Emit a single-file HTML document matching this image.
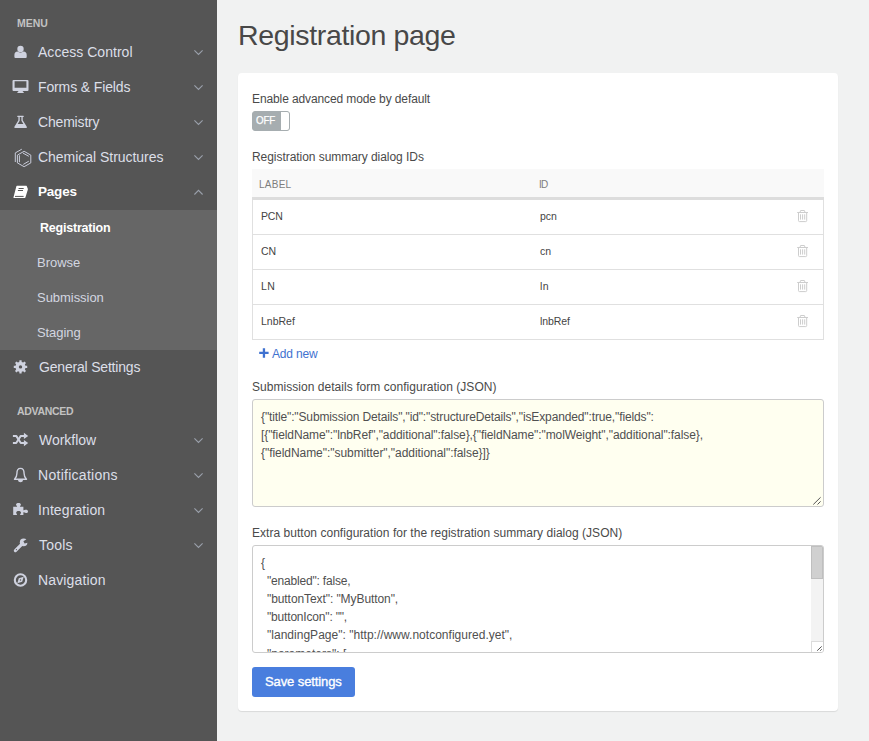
<!DOCTYPE html>
<html lang="en">
<head>
<meta charset="utf-8">
<title>Registration page</title>
<style>
*{box-sizing:border-box;margin:0;padding:0}
html,body{width:869px;height:741px;overflow:hidden}
body{background:#f1f2f2;font-family:"Liberation Sans",sans-serif;color:#333;position:relative;font-size:12px}
#side{position:absolute;left:0;top:0;width:217px;height:741px;background:#555}
#side .sub{position:absolute;left:0;top:210px;width:217px;height:140px;background:#666}
#ico{position:absolute;left:0;top:0;width:217px;height:741px}
.t{position:absolute;white-space:nowrap}
.hd{font-size:10.5px;font-weight:bold;color:#c2c2c2;line-height:14px}
.mi{font-size:14px;color:#dcdfe8;line-height:20px}
.mi.act{color:#fff;font-weight:bold;font-size:13.5px}
.si{font-size:13px;color:#d3d6e0;line-height:18px}
.si.act{color:#fff;font-weight:bold;font-size:12.5px}
h1{font-size:28.5px;font-weight:normal;color:#484848;line-height:38px}
#card{position:absolute;left:238px;top:73px;width:600px;height:638px;background:#fff;border-radius:4px;box-shadow:0 1px 1px rgba(0,0,0,.10)}
.lb{font-size:12px;color:#4a4a4a;line-height:16px}
.tg{position:absolute;left:252px;top:111px;width:38px;height:20px;border-radius:3px;background:#a6adb0;border:1px solid #a6adb0}
.tg i{position:absolute;right:0;top:0;width:8px;height:18px;background:#fff;border-radius:0 2px 2px 0}
.off{font-size:11px;line-height:14px;color:#fff;transform:scaleX(.89);transform-origin:0 0;-webkit-text-stroke:.25px #fff}
#th{position:absolute;left:252px;top:169px;width:572px;height:31px;background:#f9f9f9;border-bottom:3px solid #ddd}
.thl{font-size:10px;color:#7d7d7d;line-height:14px}
.row{position:absolute;left:252px;width:572px;height:35px;border:1px solid #e0e0e0;border-top:none}
.td{font-size:10.5px;color:#444;line-height:14px}
.add{font-size:12px;color:#3f72d0;line-height:16px}
.ta{position:absolute;left:252px;width:572px;height:108px;border:1px solid #ccc;border-radius:3px;background:#fff;overflow:hidden}
.ta p{position:absolute;left:0;font-size:12px;line-height:18px;color:#505050;white-space:pre}
#btn{position:absolute;left:252px;top:667px;width:103px;height:30px;background:#497ede;border-radius:3px}
.bt{color:#fff;font-size:13px;font-weight:normal;-webkit-text-stroke:.35px #fff;line-height:18px}
</style>
</head>
<body>
<div id="side">
  <div class="sub"></div>
  <div class="t hd" id="m0" style="left:17px;top:16px;letter-spacing:-0.03px">MENU</div>
  <div class="t mi" id="m1" style="left:38px;top:42px;letter-spacing:0.03px">Access Control</div>
  <div class="t mi" id="m2" style="left:38px;top:77px;letter-spacing:-0.13px">Forms &amp; Fields</div>
  <div class="t mi" id="m3" style="left:38px;top:112px;letter-spacing:-0.18px">Chemistry</div>
  <div class="t mi" id="m4" style="left:38px;top:147px;letter-spacing:-0.03px">Chemical Structures</div>
  <div class="t mi act" id="m5" style="left:38px;top:182px;letter-spacing:-0.20px">Pages</div>
  <div class="t si act" id="m6" style="left:40px;top:219px;letter-spacing:-0.21px">Registration</div>
  <div class="t si" id="m7" style="left:37px;top:254px;letter-spacing:-0.00px">Browse</div>
  <div class="t si" id="m8" style="left:37px;top:289px;letter-spacing:-0.04px">Submission</div>
  <div class="t si" id="m9" style="left:37px;top:324px;letter-spacing:-0.08px">Staging</div>
  <div class="t mi" id="m10" style="left:39px;top:357px;letter-spacing:-0.19px">General Settings</div>
  <div class="t hd" id="m11" style="left:17px;top:404px;letter-spacing:-0.30px">ADVANCED</div>
  <div class="t mi" id="m12" style="left:39px;top:430px;letter-spacing:-0.03px">Workflow</div>
  <div class="t mi" id="m13" style="left:38px;top:465px;letter-spacing:0.28px">Notifications</div>
  <div class="t mi" id="m14" style="left:38px;top:500px;letter-spacing:0.10px">Integration</div>
  <div class="t mi" id="m15" style="left:39px;top:535px;letter-spacing:0.20px">Tools</div>
  <div class="t mi" id="m16" style="left:38px;top:570px;letter-spacing:0.14px">Navigation</div>
  <svg id="ico" viewBox="0 0 217 741" fill="#cfd2df">

    <g fill="none" stroke="#9aa0ab" stroke-width="1.1"><path d="M194.4 50.3L198.5 54.5L202.6 50.3"/><path d="M194.4 85.3L198.5 89.5L202.6 85.3"/><path d="M194.4 120.3L198.5 124.5L202.6 120.3"/><path d="M194.4 155.3L198.5 159.5L202.6 155.3"/><path d="M194.4 438.3L198.5 442.5L202.6 438.3"/><path d="M194.4 473.3L198.5 477.5L202.6 473.3"/><path d="M194.4 508.3L198.5 512.5L202.6 508.3"/><path d="M194.4 543.3L198.5 547.5L202.6 543.3"/><path d="M194.4 194.5L198.5 190.3L202.6 194.5"/></g>
    <!-- user -->
    <circle cx="20.5" cy="48.9" r="3.2"/>
    <path d="M14.4 57V55Q14.4 51.6 17.6 51.4Q20.5 53.6 23.4 51.4Q26.7 51.6 26.7 55V57Q26.7 58 25.7 58H15.4Q14.4 58 14.4 57Z"/>
    <!-- desktop -->
    <path fill-rule="evenodd" d="M13.5 80H27.5Q28.5 80 28.5 81V90Q28.5 91 27.5 91H13.5Q12.5 91 12.5 90V81Q12.5 80 13.5 80ZM14.6 81.3V87.7H26.4V81.3Z"/>
    <path d="M18.6 91H22.5L23.8 92.6V93.1H17.3V92.6Z"/>
    <!-- flask -->
    <rect x="17.2" y="115.8" width="6.6" height="1.2" rx=".4"/>
    <path fill-rule="evenodd" d="M18.4 116.8H22.7V120.3L26.8 126.8Q27.3 128 26.1 128H15.1Q13.9 128 14.4 126.8L18.4 120.3ZM19.7 117V120.7L17.7 123.9H23.4L21.4 120.7V117Z"/>
    <!-- benzene -->
    <g fill="none" stroke="#c9ccda" stroke-width="1">
      <path d="M24.1 151.3L30.8 155.1V162.9L24.1 166.7L17.4 162.9V155.1Z"/>
      <path d="M19.4 155.3V162.2M23 153.1L28.8 156.3M23.3 164.4L28.8 161.2M15.3 162V152.9L21.8 149.2"/>
    </g>
    <!-- book -->
    <path fill="#fff" d="M17 185.8H26.2Q27 185.8 26.9 186.6L27.7 188.6Q28 189.2 27.8 189.8L25.4 197.4Q25.1 198.1 24.3 198.1H14.2Q13.2 198.1 13.5 197.2L16.3 186.4Q16.5 185.8 17 185.8Z"/>
    <path fill="none" stroke="#555" stroke-width="1" d="M18.6 188.5H23.7M17.9 190.5H23M15 196.4H23.6"/>
    <!-- gear -->
    <path fill-rule="evenodd" d="M19.29 361.95L19.42 360.19L21.58 360.19L21.71 361.95L23.15 362.54L24.48 361.39L26.01 362.92L24.86 364.25L25.45 365.69L27.21 365.82L27.21 367.98L25.45 368.11L24.86 369.55L26.01 370.88L24.48 372.41L23.15 371.26L21.71 371.85L21.58 373.61L19.42 373.61L19.29 371.85L17.85 371.26L16.52 372.41L14.99 370.88L16.14 369.55L15.55 368.11L13.79 367.98L13.79 365.82L15.55 365.69L16.14 364.25L14.99 362.92L16.52 361.39L17.85 362.54ZM18.8 366.9a1.7 1.7 0 1 0 3.4 0a1.7 1.7 0 1 0 -3.4 0Z"/>
    <!-- random -->
    <g fill="none" stroke="#cfd2df" stroke-width="2">
      <path d="M12.9 435.9H16.2L20.8 443H24.5" stroke-linejoin="round"/>
      <path d="M12.9 443H16.2L20.8 435.9H24.5" stroke-linejoin="round"/>
    </g>
    <path d="M23.9 432.8L28.2 435.9L23.9 439.1ZM23.9 439.9L28.2 443L23.9 446.2Z"/>
    <!-- bell -->
    <path fill="none" stroke="#cfd2df" stroke-width="1.4" stroke-linejoin="round" d="M20.5 468.4C17.3 468.4 16.9 471.4 16.9 473.4C16.9 476.2 16 477.8 14.5 479.2H26.5C25 477.8 24.1 476.2 24.1 473.4C24.1 471.4 23.7 468.4 20.5 468.4Z"/>
    <path d="M17.9 480H23.1Q22.8 482.3 20.5 482.3Q18.2 482.3 17.9 480Z"/>
    <!-- puzzle -->
    <path d="M13.2 506.8H17.2C17.2 506 16 505.5 16 504.6C16 503.5 17 502.9 18.5 502.9C20 502.9 20.9 503.5 20.9 504.6C20.9 505.5 19.9 506 19.9 506.8H23.4V510.3C24.2 510.3 24.8 509.7 25.9 509.7C27.2 509.7 28 510.4 28 511.4C28 512.4 27.2 513 25.9 513C24.8 513 24.2 512.3 23.4 512.3V515H20.1C20.1 514 21 513.6 21 512.6C21 511.6 20 511 18.6 511C17.2 511 16.2 511.6 16.2 512.6C16.2 513.6 17 514 17 515H13.2Z"/>
    <!-- wrench -->
    <path fill="none" stroke="#cfd2df" stroke-width="3.2" stroke-linecap="round" d="M15.4 550.6L21.4 544.7"/>
    <circle cx="23.6" cy="542.4" r="3.8"/>
    <path fill="#555" d="M23.4 541.2L27.6 538.6L28.6 542.6L24.6 543.4Z"/>
    <circle cx="16.4" cy="549.6" r=".6" fill="#555"/>
    <!-- compass -->
    <circle cx="20.5" cy="580" r="5.7" fill="none" stroke="#cfd2df" stroke-width="2.1"/>
    <path fill-rule="evenodd" d="M23.7 576.8L22.2 581.7L17.3 583.2L18.8 578.3ZM19.8 580a.7 .7 0 1 0 1.4 0a.7 .7 0 1 0 -1.4 0Z"/>
  </svg>
</div>
<h1 class="t" id="c0" style="left:238px;top:16px;letter-spacing:-0.34px">Registration page</h1>
<div id="card"></div>
<div class="t lb" id="c1" style="left:252px;top:91px;letter-spacing:-0.11px">Enable advanced mode by default</div>
<div class="tg"><i></i></div>
<div class="t off" id="c2" style="left:256px;top:113px;letter-spacing:-0.20px">OFF</div>
<div class="t lb" id="c3" style="left:252px;top:149px;letter-spacing:-0.05px">Registration summary dialog IDs</div>
<div id="th"></div>
<div class="t thl" id="c4" style="left:259px;top:178px;letter-spacing:0.25px">LABEL</div>
<div class="t thl" id="c5" style="left:539px;top:178px;letter-spacing:-0.70px">ID</div>
<div class="row" style="top:200px"></div>
<div class="row" style="top:235px"></div>
<div class="row" style="top:270px"></div>
<div class="row" style="top:305px"></div>
<div class="t td" id="r1a" style="left:261px;top:209px;letter-spacing:-0.20px">PCN</div><div class="t td" id="r1b" style="left:540px;top:209px;letter-spacing:0.00px">pcn</div>
<div class="t td" id="r2a" style="left:261px;top:244px;letter-spacing:0.00px">CN</div><div class="t td" id="r2b" style="left:540px;top:244px;letter-spacing:0.00px">cn</div>
<div class="t td" id="r3a" style="left:261px;top:279px;letter-spacing:0.50px">LN</div><div class="t td" id="r3b" style="left:540px;top:279px;letter-spacing:0.50px">ln</div>
<div class="t td" id="r4a" style="left:261px;top:314px;letter-spacing:0.00px">LnbRef</div><div class="t td" id="r4b" style="left:540px;top:314px;letter-spacing:-0.10px">lnbRef</div>
<svg style="position:absolute;left:790px;top:204px;width:26px;height:130px" viewBox="0 0 26 130" fill="none" stroke="#cdcdcd" stroke-width="1">
  <path d="M7.2 8.5H18M10 8.3L10.6 6.5H14.4L15 8.3M8.5 8.8V16.6Q8.5 17.6 9.5 17.6H15.7Q16.7 17.6 16.7 16.6V8.8M10.5 10.3V15.6M12.6 10.3V15.6M14.7 10.3V15.6"/><g transform="translate(0 35)"><path d="M7.2 8.5H18M10 8.3L10.6 6.5H14.4L15 8.3M8.5 8.8V16.6Q8.5 17.6 9.5 17.6H15.7Q16.7 17.6 16.7 16.6V8.8M10.5 10.3V15.6M12.6 10.3V15.6M14.7 10.3V15.6"/></g><g transform="translate(0 70)"><path d="M7.2 8.5H18M10 8.3L10.6 6.5H14.4L15 8.3M8.5 8.8V16.6Q8.5 17.6 9.5 17.6H15.7Q16.7 17.6 16.7 16.6V8.8M10.5 10.3V15.6M12.6 10.3V15.6M14.7 10.3V15.6"/></g><g transform="translate(0 105)"><path d="M7.2 8.5H18M10 8.3L10.6 6.5H14.4L15 8.3M8.5 8.8V16.6Q8.5 17.6 9.5 17.6H15.7Q16.7 17.6 16.7 16.6V8.8M10.5 10.3V15.6M12.6 10.3V15.6M14.7 10.3V15.6"/></g>
</svg>
<svg style="position:absolute;left:259px;top:348px;width:10px;height:10px" viewBox="0 0 10 10"><path d="M3.8 .3H6.1V3.8H9.6V6.1H6.1V9.7H3.8V6.1H.2V3.8H3.8Z" fill="#3f72d0"/></svg>
<div class="t add" id="c6" style="left:272px;top:346px;letter-spacing:-0.19px">Add new</div>
<div class="t lb" id="c7" style="left:252px;top:379px;letter-spacing:0.04px">Submission details form configuration (JSON)</div>
<div class="ta" style="top:399px;background:#fffff0">
<p id="a1" style="left:8px;top:8px;letter-spacing:-0.13px">{"title":"Submission Details","id":"structureDetails","isExpanded":true,"fields":</p>
<p id="a2" style="left:8px;top:26px;letter-spacing:-0.09px">[{"fieldName":"lnbRef","additional":false},{"fieldName":"molWeight","additional":false},</p>
<p id="a3" style="left:8px;top:44px;letter-spacing:-0.05px">{"fieldName":"submitter","additional":false}]}</p>
<svg style="position:absolute;right:0;bottom:0;width:12px;height:12px" viewBox="0 0 12 12"><path d="M2.3 10.5L9.6 3.3M6.5 10.5L9.6 7.4" stroke="#555" stroke-width="1" fill="none"/></svg>
</div>
<div class="t lb" id="c8" style="left:252px;top:525px;letter-spacing:0.03px">Extra button configuration for the registration summary dialog (JSON)</div>
<div class="ta" style="top:545px">
<p id="b1" style="left:8px;top:8px">{</p>
<p id="b2" style="left:14px;top:26px;letter-spacing:-0.19px">"enabled": false,</p>
<p id="b3" style="left:14px;top:44px;letter-spacing:-0.08px">"buttonText": "MyButton",</p>
<p id="b4" style="left:14px;top:62px;letter-spacing:-0.18px">"buttonIcon": "",</p>
<p id="b5" style="left:14px;top:80px;letter-spacing:0.02px">"landingPage": "http://www.notconfigured.yet",</p>
<p id="b6" style="left:14px;top:99px">"parameters": [</p>
<div style="position:absolute;right:0;top:0;width:12px;height:95px;background:#f3f3f3"><div style="position:absolute;left:0;top:0;width:12px;height:33px;background:#d0d0d0;border:1px solid #bfbfbf"></div></div>
<div style="position:absolute;right:0;bottom:0;width:12px;height:11px;background:#fff;border-left:1px solid #dcdcdc;border-top:1px solid #dcdcdc"><svg style="position:absolute;right:0;bottom:0;width:8px;height:8px" viewBox="0 0 8 8"><path d="M2.2 6.7L6.7 2.4M5.3 6.7L6.7 5.3" stroke="#555" stroke-width="1" fill="none"/></svg></div>
</div>
<div id="btn"></div>
<div class="t bt" id="c9" style="left:265px;top:673px;letter-spacing:-0.10px">Save settings</div>
</body>
</html>
